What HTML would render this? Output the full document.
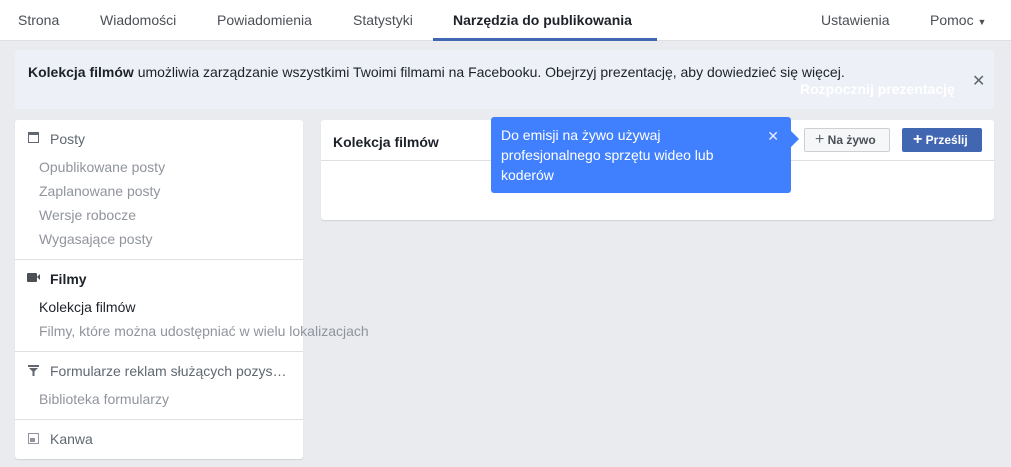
<!DOCTYPE html>
<html><head><meta charset="utf-8"><style>
*{margin:0;padding:0;box-sizing:border-box}
body{width:1011px;height:467px;background:#e9ebee;font-family:"Liberation Sans",Arial,sans-serif;font-size:14px;color:#1d2129;position:relative;overflow:hidden}
.nav{position:absolute;left:0;top:0;width:1011px;height:41px;background:#fff;border-bottom:1px solid #dddfe2}
.nav span{position:absolute;top:12px;font-size:14px;color:#4b4f56}
.nav .act{color:#1d2129;font-weight:bold}
.ul{position:absolute;left:433px;top:38px;width:224px;height:3px;background:#4267b2}
.banner{position:absolute;left:15px;top:50px;width:979px;height:59px;background:#edf0f7;border-radius:3px}
.banner p{position:absolute;left:13px;top:14px;font-size:14px}
.rp{position:absolute;left:785px;top:31px;color:#fff;font-weight:bold;font-size:14px}
.x{position:absolute;color:#606770;font-size:16px}
.side{position:absolute;left:15px;top:120px;width:288px;height:339px;background:#fff;border-radius:3px;box-shadow:0 1px 1px rgba(0,0,0,.1)}
.side div{position:absolute;white-space:nowrap;font-size:14px}
.h{left:35px;color:#606770}
.s{left:24px;color:#90949c}
.hr{left:0;width:288px;height:1px;background:#dddfe2}
.main{position:absolute;left:321px;top:120px;width:673px;height:100px;background:#fff;border-radius:3px;box-shadow:0 1px 1px rgba(0,0,0,.1)}
.tip{position:absolute;left:491px;top:117px;width:300px;height:76px;background:#4080ff;border-radius:3px;color:#fff;font-size:14px;line-height:20px;padding:8px 10px}
.tip:after{content:"";position:absolute;right:-8px;top:14px;border:8px solid transparent;border-left-color:#4080ff;border-right:0}
.btn{position:absolute;top:128px;height:24px;border-radius:2px;font-size:12px;font-weight:bold;line-height:22px;padding-left:10px}
</style></head><body>
<div class="nav">
<span style="left:18px">Strona</span>
<span style="left:100px">Wiadomości</span>
<span style="left:217px">Powiadomienia</span>
<span style="left:353px">Statystyki</span>
<span class="act" style="left:453px">Narzędzia do publikowania</span>
<span style="left:821px">Ustawienia</span>
<span style="left:930px">Pomoc <small style="font-size:9px">▼</small></span>
<div class="ul"></div>
</div>
<div class="banner"><p><b>Kolekcja filmów</b> umożliwia zarządzanie wszystkimi Twoimi filmami na Facebooku. Obejrzyj prezentację, aby dowiedzieć się więcej.</p>
<div class="rp">Rozpocznij prezentację</div>
<div class="x" style="left:957px;top:21px">✕</div></div>
<div class="side">
<div style="left:13px;top:12px;width:11px;height:11px;border:1.5px solid #606770;border-top-width:3px"></div>
<div class="h" style="top:11px">Posty</div>
<div class="s" style="top:39px">Opublikowane posty</div>
<div class="s" style="top:63px">Zaplanowane posty</div>
<div class="s" style="top:87px">Wersje robocze</div>
<div class="s" style="top:111px">Wygasające posty</div>
<div class="hr" style="top:139px"></div>
<div style="left:12px;top:153px;width:10px;height:9px;background:#4b4f56;border-radius:1px"></div>
<div style="left:22px;top:154px;width:0;height:0;border:3.5px solid transparent;border-right-color:#4b4f56;border-left:0"></div>
<div class="h" style="top:151px;color:#1d2129;font-weight:bold">Filmy</div>
<div class="s" style="top:179px;color:#1d2129">Kolekcja filmów</div>
<div class="s" style="top:203px">Filmy, które można udostępniać w wielu lokalizacjach</div>
<div class="hr" style="top:231px"></div>
<svg style="position:absolute;left:13px;top:245px" width="11" height="11" viewBox="0 0 11 11"><rect x="0" y="0" width="11" height="2" fill="#606770"/><path d="M1 3h9L6.5 6.5V11h-2V6.5z" fill="#606770"/></svg>
<div class="h" style="top:243px">Formularze reklam służących pozys…</div>
<div class="s" style="top:271px">Biblioteka formularzy</div>
<div class="hr" style="top:299px"></div>
<div style="left:13px;top:313px;width:11px;height:11px;border:1px solid #90949c"><span style="position:absolute;left:1px;bottom:1px;width:5px;height:4px;background:#90949c"></span></div>
<div class="h" style="top:311px">Kanwa</div>
</div>
<div class="main">
<div style="position:absolute;left:12px;top:14px;font-weight:bold;font-size:14px">Kolekcja filmów</div>
<div style="position:absolute;left:0;top:40px;width:673px;height:1px;background:#dddfe2"></div>
</div>
<div class="btn" style="left:804px;width:86px;background:#f6f7f9;border:1px solid #ced0d4;color:#4b4f56"><span style="font-weight:normal;font-size:16px;color:#606770">+</span> Na żywo</div>
<div class="btn" style="left:902px;width:80px;background:#4267b2;border:1px solid #4267b2;color:#fff"><span style="font-size:16px">+</span> Prześlij</div>
<div class="tip">Do emisji na żywo używaj<br>profesjonalnego sprzętu wideo lub<br>koderów<span style="position:absolute;right:12px;top:9px;font-size:14px;color:#e8eefc">✕</span></div>
</body></html>
